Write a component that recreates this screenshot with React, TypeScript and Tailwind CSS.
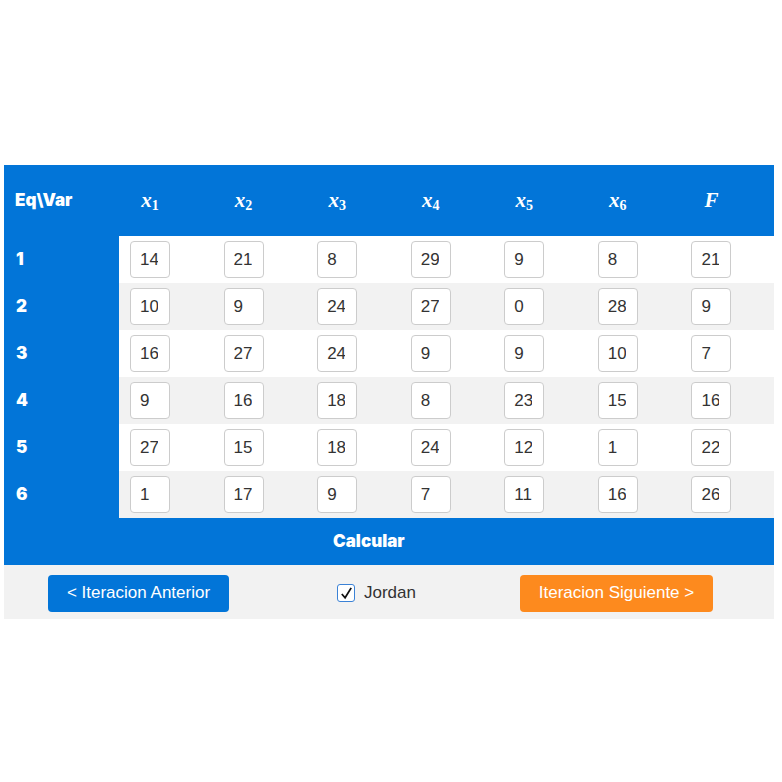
const rows = [
  [14, 21, 8, 29, 9, 8, 21],
  [10, 9, 24, 27, 0, 28, 9],
  [16, 27, 24, 9, 9, 10, 7],
  [9, 16, 18, 8, 23, 15, 16],
  [27, 15, 18, 24, 12, 1, 22],
  [1, 17, 9, 7, 11, 16, 26],
];

const vars = ["1", "2", "3", "4", "5", "6"];

const heavy = "font-['Inter','Liberation_Sans',sans-serif] font-black";

function MathVar({ sub }: { sub?: string }) {
  return (
    <span className="font-['Liberation_Serif',serif] text-[21px] font-bold text-white">
      {sub ? (
        <>
          <i>x</i>
          <sub className="text-[14px] not-italic font-bold">{sub}</sub>
        </>
      ) : (
        <i>F</i>
      )}
    </span>
  );
}

export default function App() {
  return (
    <div className="min-h-[782px] bg-white pt-[165px] px-[4px] font-['Liberation_Sans',Arial,sans-serif]">
      <div className="w-[770px]">
        {/* header */}
        <div className="grid grid-cols-[115px_repeat(7,1fr)] h-[71px] bg-[#0275d8] items-center">
          <div className={`pl-[11px] text-[17px] text-white ${heavy}`}>Eq\Var</div>
          {vars.map((v) => (
            <div key={v} className="pl-[11px]">
              <div className="w-10 text-center">
                <MathVar sub={v} />
              </div>
            </div>
          ))}
          <div className="pl-[11px]">
            <div className="w-10 text-center">
              <MathVar />
            </div>
          </div>
        </div>

        {/* body */}
        {rows.map((r, i) => (
          <div key={i} className="grid grid-cols-[115px_repeat(7,1fr)] h-[47px]">
            <div className={`bg-[#0275d8] flex items-center pl-[12px] text-[17px] text-white ${heavy}`}>
              {i + 1}
            </div>
            {r.map((v, j) => (
              <div
                key={j}
                className={`flex items-center pl-[11px] ${i % 2 === 1 ? "bg-[#f2f2f2]" : "bg-white"}`}
              >
                <input
                  readOnly
                  value={v}
                  className="w-10 h-[37px] rounded-[4px] border border-[#cccccc] bg-white pl-[9px] pr-[11px] text-[17px] text-[#333] outline-none"
                />
              </div>
            ))}
          </div>
        ))}

        {/* calcular */}
        <div className={`h-[47px] bg-[#0275d8] flex items-center pl-[329px] text-[17px] text-white ${heavy}`}>
          Calcular
        </div>

        {/* footer */}
        <div className="h-[54px] bg-[#f2f2f2] flex items-center pl-[44px] pt-[2px]">
          <button className="w-[181px] h-[37px] rounded-[4px] bg-[#0275d8] text-white text-[17px]">
            &lt; Iteracion Anterior
          </button>
          <label className="ml-[108px] flex items-center gap-[9px] text-[17px] text-[#333]">
            <span className="w-[18px] h-[18px] rounded-[3px] border border-[#3b82d6] bg-white flex items-center justify-center">
              <svg viewBox="0 0 16 16" className="w-[15px] h-[15px]">
                <path d="M3 8.5 L6.5 12.5 L13 2" fill="none" stroke="#111" strokeWidth="1.9" />
              </svg>
            </span>
            Jordan
          </label>
          <button className="ml-[104px] w-[193px] h-[37px] rounded-[4px] bg-[#fd8a1e] text-white text-[17px]">
            Iteracion Siguiente &gt;
          </button>
        </div>
      </div>
    </div>
  );
}
